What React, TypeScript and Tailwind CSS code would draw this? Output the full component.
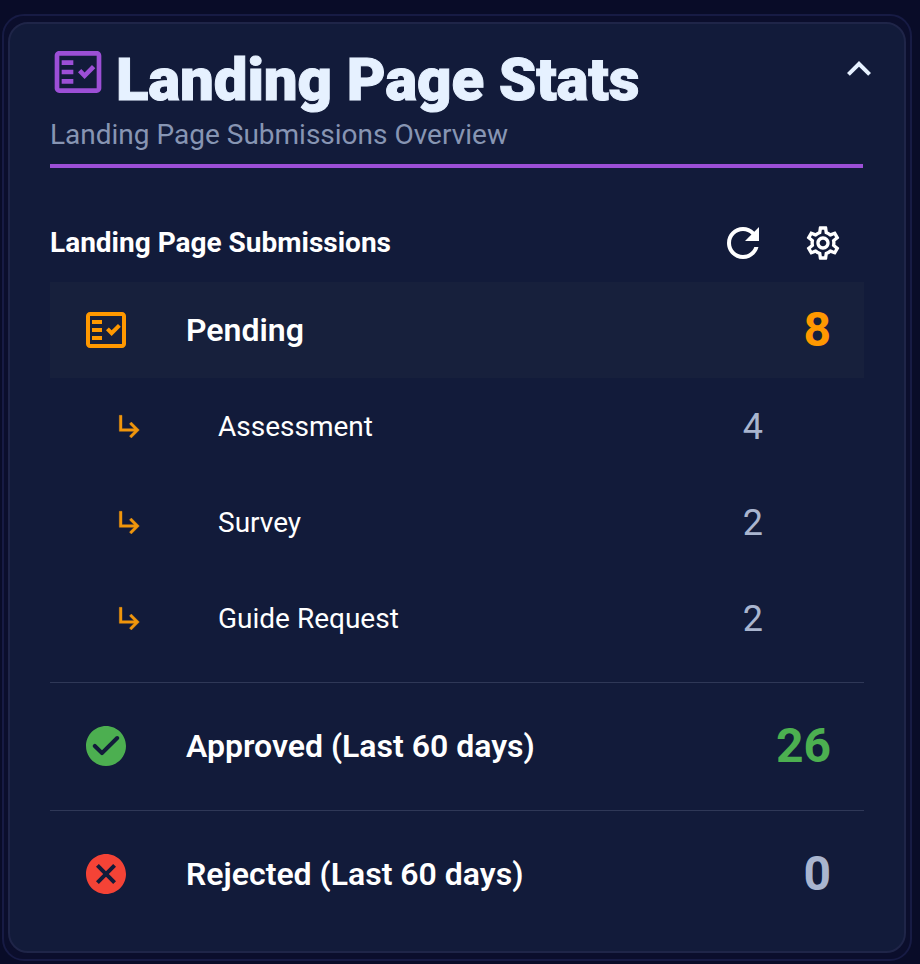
import { ReactNode } from "react";

const Icon = ({ d, size, className }: { d: string; size: number; className: string }) => (
    <svg width={size} height={size} viewBox="0 0 24 24" fill="currentColor" className={`shrink-0 ${className}`}>
        <path fillRule="evenodd" d={d} />
    </svg>
);

const factCheck = "M20 3H4c-1.1 0-2 .9-2 2v14c0 1.1.9 2 2 2h16c1.1 0 2-.9 2-2V5c0-1.1-.9-2-2-2zm0 16H4V5h16v14zM19.41 10.42 17.99 9l-3.17 3.17-1.41-1.42L12 12.16 14.82 15zM5 7h5v2H5zM5 11h5v2H5zM5 15h5v2H5z";
const arrow = "M19 15l-6 6-1.42-1.42L15.17 16H4V4h2v10h9.17l-3.59-3.58L13 9l6 6z";
const checkCircle = "M12 2C6.48 2 2 6.48 2 12s4.48 10 10 10 10-4.48 10-10S17.52 2 12 2zM9.29 16.29 5.7 12.7a.996.996 0 1 1 1.41-1.41L10 14.17l6.88-6.88a.996.996 0 1 1 1.41 1.41l-7.59 7.59a.996.996 0 0 1-1.41 0z";
const cancel = "M12 2C6.47 2 2 6.47 2 12s4.47 10 10 10 10-4.47 10-10S17.53 2 12 2zm5 13.59L15.59 17 12 13.41 8.41 17 7 15.59 10.59 12 7 8.41 8.41 7 12 10.59 15.59 7 17 8.41 13.41 12 17 15.59z";
const refresh = "M17.65 6.35C16.2 4.9 14.21 4 12 4c-4.42 0-7.99 3.58-7.99 8s3.57 8 7.99 8c3.73 0 6.84-2.55 7.73-6h-2.08c-.82 2.33-3.04 4-5.65 4-3.31 0-6-2.69-6-6s2.69-6 6-6c1.66 0 3.14.69 4.22 1.78L13 11h7V4l-2.35 2.35z";
const settings = "M19.43 12.98c.04-.32.07-.64.07-.98 0-.34-.03-.66-.07-.98l2.11-1.65c.19-.15.24-.42.12-.64l-2-3.46a.5.5 0 0 0-.61-.22l-2.49 1c-.52-.4-1.08-.73-1.69-.98l-.38-2.65A.49.49 0 0 0 14 2h-4c-.25 0-.46.18-.49.42l-.38 2.65c-.61.25-1.17.59-1.69.98l-2.49-1a.57.57 0 0 0-.18-.03c-.17 0-.34.09-.43.25l-2 3.46c-.13.22-.07.49.12.64l2.11 1.65c-.04.32-.07.65-.07.98 0 .33.03.66.07.98l-2.11 1.65c-.19.15-.24.42-.12.64l2 3.46a.5.5 0 0 0 .61.22l2.49-1c.52.4 1.08.73 1.69.98l.38 2.65c.03.24.24.42.49.42h4c.25 0 .46-.18.49-.42l.38-2.65c.61-.25 1.17-.59 1.69-.98l2.49 1c.06.02.12.03.18.03.17 0 .34-.09.43-.25l2-3.46c.12-.22.07-.49-.12-.64l-2.11-1.65zm-1.98-1.71c.04.31.05.52.05.73 0 .21-.02.43-.05.73l-.14 1.13.89.7 1.08.84-.7 1.21-1.27-.51-1.04-.42-.9.68c-.43.32-.84.56-1.25.73l-1.06.43-.16 1.13-.2 1.35h-1.4l-.19-1.35-.16-1.13-1.06-.43c-.43-.18-.83-.41-1.23-.71l-.91-.7-1.06.43-1.27.51-.7-1.21 1.08-.84.89-.7-.14-1.13c-.03-.31-.05-.54-.05-.74s.02-.43.05-.73l.14-1.13-.89-.7-1.08-.84.7-1.21 1.27.51 1.04.42.9-.68c.43-.32.84-.56 1.25-.73l1.06-.43.16-1.13.2-1.35h1.39l.19 1.35.16 1.13 1.06.43c.43.18.83.41 1.23.71l.91.7 1.06-.43 1.27-.51.7 1.21-1.07.85-.89.7.14 1.13zM12 8c-2.21 0-4 1.79-4 4s1.79 4 4 4 4-1.79 4-4-1.79-4-4-4zm0 6c-1.1 0-2-.9-2-2s.9-2 2-2 2 .9 2 2-.9 2-2 2z";
const chevron = "M12 8l-6 6 1.41 1.41L12 10.83l4.59 4.58L18 14z";

const StatRow = ({ icon, label, value, valueClass, rowClass }: { icon: ReactNode; label: string; value: string; valueClass: string; rowClass: string }) => (
    <div className={`flex items-center pl-[32px] pr-[33px] ${rowClass}`}>
        {icon}
        <span className="ml-[56px] flex-1 text-[32px] font-semibold text-white">{label}</span>
        <span className={`text-[48px] font-bold leading-none ${valueClass}`}>{value}</span>
    </div>
);

const SubRow = ({ label, value }: { label: string; value: string }) => (
    <div className="flex h-[96px] items-center pl-[64px]">
        <Icon d={arrow} size={32} className="stroke-current stroke-[0.3] text-[#f0960c]" />
        <span className="ml-[72px] flex-1 pt-[2px] text-[28px] text-white">{label}</span>
        <span className="mr-[101px] pt-[2px] text-[36px] leading-none text-[#a9b5cf]">{value}</span>
    </div>
);

export default function App() {
    return (
        <div className="min-h-[964px] bg-[#090c28] pl-[2px] pr-[8px] pt-[14px] font-['Roboto',sans-serif]">
            <div className="h-[947px] rounded-[22px] border-2 border-[#171b44] bg-[#0b0e2c] p-[4px] pt-[6px]">
                <div className="relative h-[931px] rounded-[20px] border-2 border-[#1f2548] bg-[#121b3a] pl-[40px] pr-[40px] pt-[20px]">
                    <div className="flex h-[66px] items-start">
                        <Icon d={factCheck} size={56} className="text-[#9c4fd6]" />
                        <h1 className="ml-[10px] mt-[6px] text-[60px] font-black leading-none tracking-[-0.15px] text-[#e6f1ff] [-webkit-text-stroke:1px_#e6f1ff]">Landing Page Stats</h1>
                    </div>
                    <button className="absolute right-[21px] top-[21px] text-[#e6f1ff]">
                        <Icon d={chevron} size={48} className="" />
                    </button>
                    <p className="mt-[9px] text-[28px] leading-[32px] text-[#8795b3]">Landing Page Submissions Overview</p>
                    <div className="mt-[13px] h-[4px] w-[813px] bg-[#9c4fd6]" />

                    <div className="mt-[55px] flex h-[40px] w-[814px] items-center">
                        <h2 className="flex-1 text-[28px] font-bold text-white">Landing Page Submissions</h2>
                        <Icon d={refresh} size={48} className="mr-[36px] text-white" />
                        <Icon d={settings} size={40} className="mr-[21px] text-white" />
                    </div>

                    <div className="mt-[19px] w-[814px]">
                        <StatRow
                            rowClass="h-[96px] bg-[#17203c]"
                            icon={<Icon d={factCheck} size={48} className="text-[#ff9800]" />}
                            label="Pending"
                            value="8"
                            valueClass="text-[#ff9800]"
                        />
                        <SubRow label="Assessment" value="4" />
                        <SubRow label="Survey" value="2" />
                        <SubRow label="Guide Request" value="2" />
                        <div className="mt-[16px] border-t border-[#2f3857]" />
                        <StatRow
                            rowClass="h-[125px] mb-[2px]"
                            icon={<Icon d={checkCircle} size={48} className="text-[#4caf50]" />}
                            label="Approved (Last 60 days)"
                            value="26"
                            valueClass="text-[#4caf50]"
                        />
                        <div className="border-t border-[#2f3857]" />
                        <StatRow
                            rowClass="h-[125px]"
                            icon={<Icon d={cancel} size={48} className="text-[#f44336]" />}
                            label="Rejected (Last 60 days)"
                            value="0"
                            valueClass="text-[#a9b5cf]"
                        />
                    </div>
                </div>
            </div>
        </div>
    );
}
